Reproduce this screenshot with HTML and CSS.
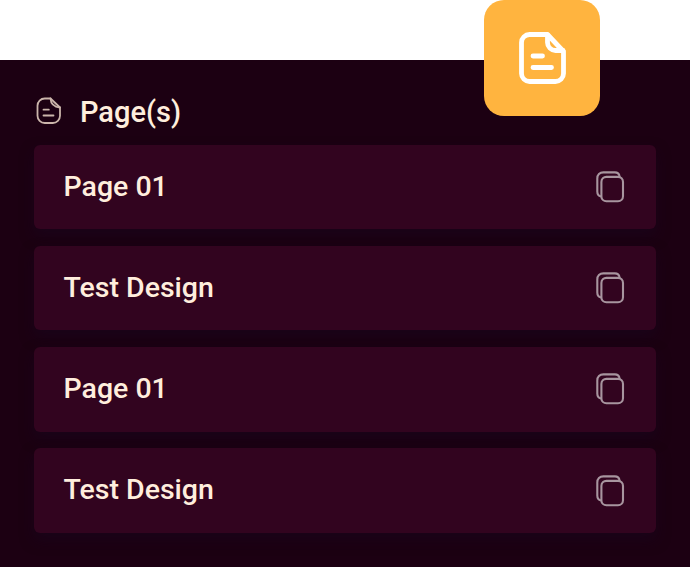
FILE: index.html
```html
<!DOCTYPE html>
<html lang="en">

<head>
    <meta charset="UTF-8">
    <meta name="viewport" content="width=device-width, initial-scale=1.0">
    <title>Page(s)</title>
    <link rel="stylesheet" href="styles.css">
</head>

<body>

    <!-- Shared icon shapes -->
    <svg class="sprite" width="0" height="0">
        <symbol id="copy" viewBox="0 0 30 32">
            <path d="M24.6 5.6C24.2 3 22.4 1.4 19.8 1.4H8.4C4.6 1.4 2.3 3.7 2.3 7.5V20.5C2.3 23 3.6 25 6 25.6"/>
            <rect x="6.4" y="5.9" width="21.6" height="24.3" rx="5"/>
        </symbol>
    </svg>

    <div class="badge">
        <svg class="badge-icon" viewBox="0 0 48 52">
            <path d="M28.5 2.5H10.5A8 8 0 0 0 2.5 10.5V41.5A8 8 0 0 0 10.5 49.5H36.5A8 8 0 0 0 44.5 41.5V19.5Z"/>
            <path d="M28.5 3V10.5A8 8 0 0 0 36.5 18.5H44"/>
            <path d="M14 24H23.5M14 35.5H32.5"/>
        </svg>
    </div>

    <div class="panel">
        <div class="panel-title">
            <svg class="title-icon" viewBox="0 0 26 28">
                <path d="M14.5 1.5H8.7A7.2 7.2 0 0 0 1.5 8.7V18.8A7.2 7.2 0 0 0 8.7 26H16.8A7.2 7.2 0 0 0 24 18.8V10.5Z"/>
                <path d="M14.5 1.5C14.8 6.2 18 10 24 10.5"/>
                <path d="M7.5 12.7H12.8M7.5 18.5H17.5"/>
            </svg>
            <span>Page(s)</span>
        </div>

        <div class="list">
            <div class="item">
                <span class="item-name">Page 01</span>
                <svg class="copy-icon"><use href="#copy"/></svg>
            </div>
            <div class="item">
                <span class="item-name">Test Design</span>
                <svg class="copy-icon"><use href="#copy"/></svg>
            </div>
            <div class="item">
                <span class="item-name">Page 01</span>
                <svg class="copy-icon"><use href="#copy"/></svg>
            </div>
            <div class="item">
                <span class="item-name">Test Design</span>
                <svg class="copy-icon"><use href="#copy"/></svg>
            </div>
        </div>
    </div>

</body>

</html>
```

FILE: styles.css
```css
* {
    box-sizing: border-box;
}

body {
    margin: 0;
    padding-top: 60px;
    background: #fff;
    font-family: Roboto, sans-serif;
    font-weight: 500;
    color: #ffeedd;
    overflow: hidden;
}

svg {
    display: block;
    fill: none;
    stroke-linecap: round;
    stroke-linejoin: round;
}

.sprite {
    position: absolute;
}

.panel {
    width: 690px;
    height: 506.5px;
    padding: 31px 34px 0;
    background: #1c0012;
    overflow: hidden;
}

.panel-title {
    display: flex;
    align-items: center;
    height: 41px;
    padding-left: 1.5px;
    font-size: 29px;
}

.title-icon {
    width: 26px;
    height: 28px;
    margin: 0 18.5px 2px 0;
    stroke: #cbb5ab;
    stroke-width: 1.8;
}

.list {
    display: flex;
    flex-direction: column;
    gap: 16.8px;
    margin-top: 12.5px;
}

.item {
    display: flex;
    align-items: center;
    justify-content: space-between;
    height: 84.5px;
    padding: 0 31px 0 29.5px;
    border-radius: 6px;
    background: #32041f;
    box-shadow: 0 7px 14px rgba(24, 5, 32, 0.5);
    font-size: 28.5px;
}

.item-name {
    padding-bottom: 1.5px;
}

.copy-icon {
    width: 30px;
    height: 32px;
    stroke: #a8959f;
    stroke-width: 2.1;
}

/* Orange tile sits over the top edge of the panel */
.badge {
    position: absolute;
    top: 0;
    left: 484.4px;
    display: flex;
    align-items: center;
    justify-content: center;
    width: 116px;
    height: 116px;
    padding-left: 1px;
    border-radius: 20px;
    background: #ffb43f;
}

.badge-icon {
    width: 48px;
    height: 52px;
    stroke: #fff;
    stroke-width: 4.8;
}
```
